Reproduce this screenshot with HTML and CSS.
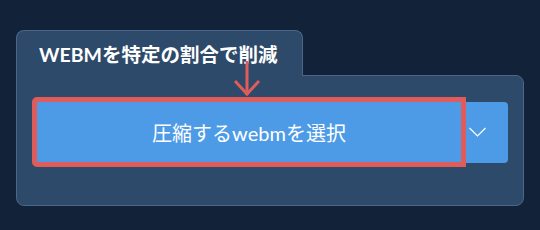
FILE: index.html
```html
<!DOCTYPE html>
<html lang="ja">

<head>
    <meta charset="UTF-8">
    <title>WEBM圧縮</title>
    <link rel="stylesheet" href="styles.css">
</head>

<body>
    <div class="card">
        <div class="tab">WEBMを特定の割合で削減</div>
        <div class="panel">
            <div class="btn-group">
                <button class="btn-main">圧縮するwebmを選択</button>
                <button class="btn-drop">
                    <svg width="17" height="10" viewBox="0 0 17 10">
                        <polyline points="0.5,1 8.5,9 16.5,1" fill="none" stroke="#ffffff" stroke-width="1.2" />
                    </svg>
                </button>
            </div>
        </div>

        <!-- annotation arrow -->
        <svg class="pointer" width="30" height="38" viewBox="0 0 30 38">
            <line x1="15" y1="0" x2="15" y2="34" stroke="#e05c5a" stroke-width="3" />
            <polyline points="3,20 15,33 27,20" fill="none" stroke="#e05c5a" stroke-width="3" />
        </svg>
    </div>
</body>

</html>
```

FILE: styles.css
```css
:root {
    --page-bg: #112239;
    --panel-bg: #2d4a6a;
    --panel-border: #4b6687;
    --blue: #4d9be6;
    --red: #e05c5a;
}

* {
    margin: 0;
    padding: 0;
    box-sizing: border-box;
}

body {
    background-color: var(--page-bg);
    font-family: 'Lato', 'Noto Sans CJK JP', sans-serif;
    color: #ffffff;
    padding: 30px 16px 0 16px;
}

.card {
    position: relative;
    width: 508px;
}

.tab {
    position: relative;
    z-index: 1;
    width: 287px;
    height: 46px;
    margin-bottom: -1px;
    padding: 2px 0 0 22px;
    background-color: var(--panel-bg);
    border: 1px solid var(--panel-border);
    border-bottom: none;
    border-radius: 8px 8px 0 0;
    font-size: 19.5px;
    font-weight: 700;
    line-height: 44px;
    white-space: nowrap;
}

.panel {
    height: 131px;
    padding: 21px 15px 0 15px;
    background-color: var(--panel-bg);
    border: 1px solid var(--panel-border);
    border-radius: 0 8px 8px 8px;
}

.btn-group {
    display: flex;
    align-items: center;
}

.btn-main {
    width: 434px;
    height: 70px;
    background-color: var(--blue);
    border: 5px solid var(--red);
    border-radius: 5px 0 0 5px;
    color: #ffffff;
    font-family: inherit;
    font-size: 20px;
    font-weight: 400;
}

.btn-drop {
    display: flex;
    align-items: center;
    width: 42px;
    height: 61px;
    padding: 0 0 0 3px;
    background-color: var(--blue);
    border: none;
    border-radius: 0 4px 4px 0;
}

.pointer {
    position: absolute;
    z-index: 2;
    left: 216px;
    top: 31px;
}
```
